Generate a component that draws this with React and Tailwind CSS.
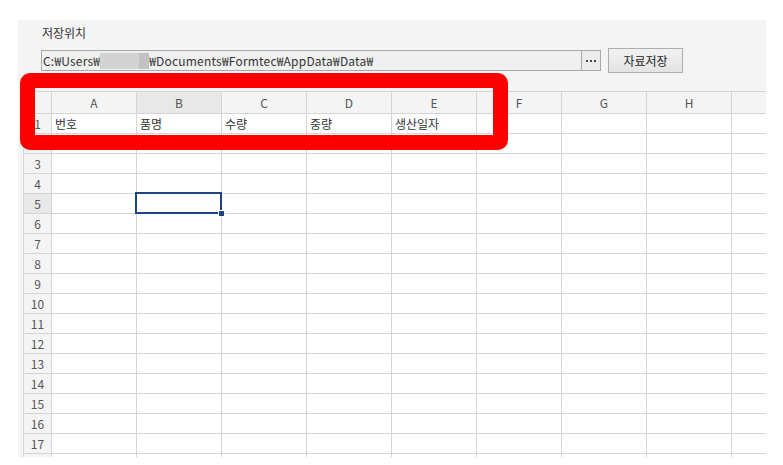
import React from "react";

const COLS = ["A", "B", "C", "D", "E", "F", "G", "H", ""];
const ROW1 = ["번호", "품명", "수량", "중량", "생산일자", "", "", "", ""];
const font = { fontFamily: '"Noto Sans CJK KR", "Noto Sans", sans-serif' };

export default function App() {
  const rows = Array.from({ length: 18 }, (_, i) => i + 1);
  return (
    <div className="relative w-[783px] h-[465px] bg-white overflow-hidden" style={font}>
      <div className="ml-[18px] mt-[20px] w-[748px] h-[437px] bg-[#f4f4f4] flex flex-col overflow-hidden">
        <div className="ml-[24px] mt-[5px] h-[16px] text-[12px] leading-[16px] text-[#333]">저장위치</div>
        <div className="mt-[7px] ml-[23px] flex items-center h-[25px]">
          <div className="w-[541px] h-[21px] border border-[#a9a9a9] bg-[#f0f0f0] flex items-center pl-[1px] text-[12px] text-[#333] leading-none whitespace-nowrap tracking-[0.2px]">
            <span>C:₩Users₩</span>
            <span className="inline-flex h-[16px] w-[49px]">
              <span className="w-[39px] bg-[#d3d3d3]"></span>
              <span className="w-[10px] bg-[#c2c2c2]"></span>
            </span>
            <span>₩Documents₩Formtec₩AppData₩Data₩</span>
          </div>
          <div className="w-[19px] h-[21px] border border-l-0 border-[#a9a9a9] bg-[#ececec] flex items-center justify-center gap-[2px]">
            <span className="w-[2px] h-[2px] bg-[#444]"></span>
            <span className="w-[2px] h-[2px] bg-[#444]"></span>
            <span className="w-[2px] h-[2px] bg-[#444]"></span>
          </div>
          <button className="ml-[7px] w-[75px] h-[25px] border border-[#adadad] bg-gradient-to-b from-[#f2f2f2] to-[#e3e3e3] text-[12px] text-[#222] leading-none">
            자료저장
          </button>
        </div>
        <div className="mt-[18px] ml-[5px] border-l border-t border-[#d4d4d4] grid grid-cols-[28px_repeat(8,85px)_1fr] bg-white text-[12px]">
          <div className="h-[22px] bg-[#f4f4f4] border-r border-b border-[#d4d4d4]"></div>
          {COLS.map((c, i) => (
            <div
              key={"h" + i}
              className={`h-[22px] border-b border-[#d4d4d4] flex items-center justify-center text-[#555] leading-none ${i === 8 ? "" : "border-r"} ${i === 1 ? "bg-[#e8e8e8]" : "bg-[#f4f4f4]"}`}
            >
              {c}
            </div>
          ))}
          {rows.map((r) => (
            <React.Fragment key={r}>
              <div
                className={`h-[20px] border-r border-b border-[#d4d4d4] flex items-center justify-center text-[#555] leading-none ${r === 5 ? "bg-[#e8e8e8]" : "bg-[#f4f4f4]"}`}
              >
                {r < 18 ? r : ""}
              </div>
              {COLS.map((_, i) => (
                <div
                  key={i}
                  className={`h-[20px] border-b border-[#d4d4d4] flex items-center pl-[3px] text-[#333] leading-none whitespace-nowrap ${i === 8 ? "" : "border-r"}`}
                >
                  {r === 1 ? ROW1[i] : ""}
                </div>
              ))}
            </React.Fragment>
          ))}
        </div>
      </div>
      {/* selection */}
      <div className="absolute left-[135px] top-[192px] w-[87px] h-[22px] border-2 border-[#1c4587]"></div>
      <div className="absolute left-[219px] top-[211px] w-[5px] h-[5px] bg-[#1c4587] outline outline-1 outline-white"></div>
      {/* red highlight */}
      <div className="absolute left-[20px] top-[73px] w-[488px] h-[77px] border-[15px] border-[#ff0000] rounded-[10px]"></div>
    </div>
  );
}
